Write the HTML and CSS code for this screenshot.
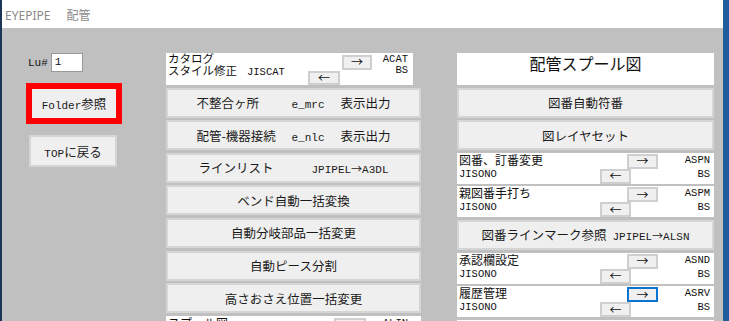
FILE: index.html
```html
<!DOCTYPE html>
<html lang="ja">

<head>
    <meta charset="UTF-8">
    <title>EYEPIPE 配管</title>
    <link rel="stylesheet" href="styles.css">
</head>

<body>
    <div class="window">
        <div class="titlebar"><span>EYEPIPE</span><span class="sub">配管</span></div>
        <div class="client">
            <!-- 左列 -->
            <div class="col-left">
                <div class="lu"><span class="mono">Lu#</span><span class="lu-box">1</span></div>
                <div class="hilite"><button class="btn btn-folder"><span class="mono">Folder</span>参照</button></div>
                <button class="btn btn-top"><span class="mono">TOP</span>に戻る</button>
            </div>

            <!-- 中列 -->
            <div class="col col-mid">
                <div class="panel panel-cat">
                    <div class="lines">
                        <div>カタログ</div>
                        <div>スタイル修正<span class="mono gap-l">JISCAT</span></div>
                    </div>
                    <div class="arrows">
                        <button class="arr fwd">→</button>
                        <button class="arr">←</button>
                    </div>
                    <div class="codes mono">
                        <div>ACAT</div>
                        <div>BS</div>
                    </div>
                </div>
                <button class="btn"><span class="w95">不整合ヶ所</span><span class="mono w49">e_mrc</span><span>表示出力</span></button>
                <button class="btn"><span class="w95">配管-機器接続</span><span class="mono w49">e_nlc</span><span>表示出力</span></button>
                <button class="btn btn-line"><span class="w113">ラインリスト</span><span class="mono">JPIPEL<i class="ar">→</i>A3DL</span></button>
                <button class="btn">ベンド自動一括変換</button>
                <button class="btn">自動分岐部品一括変更</button>
                <button class="btn">自動ピース分割</button>
                <button class="btn">高さおさえ位置一括変更</button>
                <div class="panel panel-wide">
                    <div class="lines">
                        <div>スプール図</div>
                        <div class="mono">JISONO</div>
                    </div>
                    <div class="arrows">
                        <button class="arr fwd">→</button>
                        <button class="arr">←</button>
                    </div>
                    <div class="codes mono">
                        <div>ALIN</div>
                        <div>BS</div>
                    </div>
                </div>
            </div>

            <!-- 右列 -->
            <div class="col col-right">
                <div class="panel panel-title">配管スプール図</div>
                <button class="btn">図番自動符番</button>
                <button class="btn">図レイヤセット</button>
                <div class="panel">
                    <div class="lines">
                        <div>図番、訂番変更</div>
                        <div class="mono">JISONO</div>
                    </div>
                    <div class="arrows">
                        <button class="arr fwd">→</button>
                        <button class="arr">←</button>
                    </div>
                    <div class="codes mono">
                        <div>ASPN</div>
                        <div>BS</div>
                    </div>
                </div>
                <div class="panel">
                    <div class="lines">
                        <div>親図番手打ち</div>
                        <div class="mono">JISONO</div>
                    </div>
                    <div class="arrows">
                        <button class="arr fwd">→</button>
                        <button class="arr">←</button>
                    </div>
                    <div class="codes mono">
                        <div>ASPM</div>
                        <div>BS</div>
                    </div>
                </div>
                <button class="btn"><span class="w131">図番ラインマーク参照</span><span class="mono">JPIPEL<i class="ar">→</i>ALSN</span></button>
                <div class="panel">
                    <div class="lines">
                        <div>承認欄設定</div>
                        <div class="mono">JISONO</div>
                    </div>
                    <div class="arrows">
                        <button class="arr fwd">→</button>
                        <button class="arr">←</button>
                    </div>
                    <div class="codes mono">
                        <div>ASND</div>
                        <div>BS</div>
                    </div>
                </div>
                <div class="panel">
                    <div class="lines">
                        <div>履歴管理</div>
                        <div class="mono">JISONO</div>
                    </div>
                    <div class="arrows">
                        <button class="arr fwd focus">→</button>
                        <button class="arr">←</button>
                    </div>
                    <div class="codes mono">
                        <div>ASRV</div>
                        <div>BS</div>
                    </div>
                </div>
                <div class="panel">
                    <div class="lines">
                        <div>図面一覧図</div>
                        <div class="mono">JISONO</div>
                    </div>
                    <div class="arrows">
                        <button class="arr fwd">→</button>
                        <button class="arr">←</button>
                    </div>
                    <div class="codes mono">
                        <div>ASLT</div>
                        <div>BS</div>
                    </div>
                </div>
            </div>
        </div>
    </div>
</body>

</html>
```

FILE: styles.css
```css
body {
    margin: 0;
    height: 321px;
    overflow: hidden;
    background: linear-gradient(90deg, #1c3556 0, #1c3556 2px, #1f5d9c 2px);
    font-family: "Noto Sans CJK JP", sans-serif;
    color: #111;
}

.mono {
    font-family: "Liberation Mono", "Noto Sans CJK JP", monospace;
    font-size: 11px;
}

.ar {
    font-style: normal;
    font-family: "Noto Sans CJK JP", sans-serif;
    font-size: 11px;
}

.window {
    margin-left: 2px;
    width: 721px;
    height: 321px;
    background: #c0c0c0;
    overflow: hidden;
}

/* タイトルバー */
.titlebar {
    height: 28px;
    box-sizing: border-box;
    padding: 6px 0 0 3px;
    background: #fff;
    color: #8a8a8a;
    font: 12px "Noto Sans", "Noto Sans CJK JP", sans-serif;
}

.titlebar .sub {
    margin-left: 16px;
}

.client {
    display: flex;
    padding-top: 25px;
}

/* 左列 */
.col-left {
    width: 164px;
    flex: none;
    box-sizing: border-box;
    padding-left: 24px;
}

.lu {
    display: flex;
    align-items: center;
    height: 19px;
    margin-left: 2px;
}

.lu-box {
    width: 32px;
    height: 19px;
    box-sizing: border-box;
    margin-left: 3px;
    padding-left: 3px;
    border: 1px solid #9a9a9a;
    background: #fff;
    font: 11px/17px "Liberation Mono", monospace;
}

.hilite {
    width: 96px;
    height: 41px;
    box-sizing: border-box;
    margin-top: 11px;
    border: 6px solid #f00;
}

.btn {
    display: block;
    width: 100%;
    height: 30px;
    box-sizing: border-box;
    padding: 0;
    border: 2px solid #d5d5d5;
    background: #efefef;
    color: #1a1a1a;
    font-family: "Noto Sans CJK JP", sans-serif;
    font-size: 12.5px;
    text-align: center;
    white-space: nowrap;
}

.hilite .btn {
    height: 29px;
    border: none;
}

.btn-top {
    width: 88px;
    height: 32px;
    margin: 11px 0 0 3px;
}

/* 中列・右列 */
.col {
    display: flex;
    flex-direction: column;
    gap: 2.6px;
    flex: none;
}

.col-mid {
    width: 255px;
}

.col-right {
    width: 257px;
    margin-left: 36px;
}

.btn span {
    display: inline-block;
    text-align: left;
}

.w95 {
    width: 95px;
}

.w49 {
    width: 49px;
}

.w113 {
    width: 113px;
}

.w131 {
    width: 131px;
}

.btn .mono {
    font-size: 11px;
}

.gap-l {
    margin-left: 10px;
}

/* 白パネル */
.panel {
    display: flex;
    height: 31px;
    flex: none;
    background: #fff;
    font-size: 12px;
    overflow: hidden;
}

.panel .lines {
    flex: 1;
    padding: 0 0 0 2px;
    line-height: 14px;
    white-space: nowrap;
}

.panel .mono {
    font-size: 10.5px;
}

.arrows {
    display: flex;
    flex-direction: column;
    width: 58px;
}

.arr {
    width: 31px;
    height: 15px;
    box-sizing: border-box;
    padding: 0;
    border: 2px solid #cfcfcf;
    background: #f0f0f0;
    color: #111;
    font: 12px/10px "Noto Sans CJK JP", sans-serif;
}

.arr.fwd {
    margin: 1px 0 0 27px;
}

.arr.fwd + .arr {
    height: 15px;
    margin-top: 0;
}

.arr.focus {
    border-color: #0a74d0;
}

.codes {
    width: 56px;
    box-sizing: border-box;
    padding: 0 4px 0 0;
    text-align: right;
    line-height: 14px;
}

.panel-cat {
    width: 247px;
    height: 32px;
}

.panel-cat .lines {
    font-size: 11.5px;
    line-height: 11.5px;
}

.panel-cat .arrows {
    width: 64px;
}

.panel-cat .arr.fwd {
    width: 30px;
    margin: 2px 0 0 34px;
}

.panel-cat .arr.fwd + .arr {
    width: 32px;
    margin-top: 1px;
}

.panel-cat .codes {
    width: 41px;
    padding: 1px 5px 0 0;
    line-height: 11px;
}

.panel-wide .arrows {
    width: 64px;
}

.panel-wide .arr.fwd {
    width: 32px;
    margin: 2px 0 0 32px;
}

.panel-wide .codes {
    width: 55px;
    padding-right: 13px;
}

.panel-title {
    display: block;
    height: 32px;
    text-align: center;
    font-size: 16px;
    line-height: 20px;
}
```
